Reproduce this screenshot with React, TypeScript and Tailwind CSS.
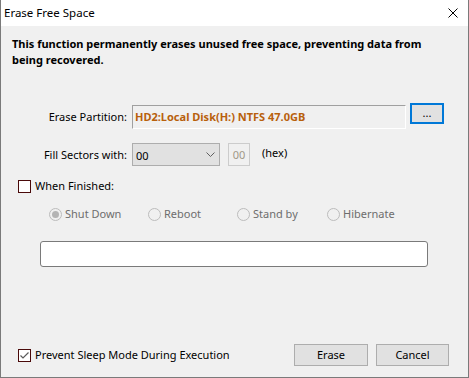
const font = { fontFamily: '"Noto Sans", "Open Sans", sans-serif' }

function Radio({ label, checked, className }: { label: string; checked?: boolean; className?: string }) {
  return (
    <div className={`flex items-center ${className ?? ''}`}>
      <span className="w-[13px] h-[13px] rounded-full border border-[#bcbcbc] bg-[#f0f0f0] flex items-center justify-center">
        {checked && <span className="w-[7px] h-[7px] rounded-full bg-[#b4b4b4]" />}
      </span>
      <span className="ml-[3px] text-[#6d6d6d]">{label}</span>
    </div>
  )
}

function Checkbox({ checked }: { checked?: boolean }) {
  return (
    <span className="w-[13px] h-[13px] border border-[#4a0a0a] bg-white flex items-center justify-center">
      {checked && (
        <svg width="11" height="11" viewBox="0 0 11 11">
          <path d="M1.5 5.5 L4 8 L9.5 2.5" fill="none" stroke="#5a5a5a" strokeWidth="1.2" />
        </svg>
      )}
    </span>
  )
}

export default function App() {
  return (
    <div
      className="w-[469px] h-[378px] flex flex-col bg-[#f0f0f0] border-x border-b border-[#7a7a7a] text-[11px] leading-[16px] text-black whitespace-nowrap"
      style={font}
    >
      {/* Title bar */}
      <div className="h-[26px] bg-white flex items-center justify-between pl-[3px] pr-[10px] shrink-0 text-[11.5px]">
        <span>Erase Free Space</span>
        <svg width="10" height="10" viewBox="0 0 10 10">
          <path d="M0.5 0.5 L9.5 9.5 M9.5 0.5 L0.5 9.5" stroke="#000" strokeWidth="1" />
        </svg>
      </div>

      <div className="flex-1 flex flex-col pl-[11px] pr-[19px] pt-[10px] pb-[11px]">
        <p className="font-bold">
          This function permanently erases unused free space, preventing data from
          <br />
          being recovered.
        </p>

        {/* Erase partition */}
        <div className="flex items-start mt-[37px]">
          <div className="w-[115px] h-[24px] flex items-center justify-end">Erase Partition:</div>
          <div className="ml-[5px] w-[274px] h-[24px] flex items-center pl-[2px] border-t border-l border-[#a0a0a0] border-b-white border-r-white border-b border-r font-bold text-[#b8600c]">
            HD2:Local Disk(H:) NTFS 47.0GB
          </div>
          <button className="ml-[4px] -mt-[2px] w-[34px] h-[21px] border-2 border-[#0078d7] bg-[#e1e1e1] flex items-center justify-center leading-none pb-[3px]">
            ...
          </button>
        </div>

        {/* Fill sectors */}
        <div className="flex items-center mt-[14px]">
          <div className="w-[115px] text-right">Fill Sectors with:</div>
          <div className="ml-[5px] w-[88px] h-[23px] border border-[#adadad] bg-[#e1e1e1] flex items-center justify-between pl-[3px] pr-[4px]">
            <span className="pt-[2px]">00</span>
            <svg width="9" height="6" viewBox="0 0 9 6">
              <path d="M0.5 0.5 L4.5 4.5 L8.5 0.5" fill="none" stroke="#606060" strokeWidth="1" />
            </svg>
          </div>
          <div className="ml-[8px] w-[22px] h-[23px] border border-[#cccccc] bg-[#f0f0f0] flex items-center justify-center text-[#a09888]">
            00
          </div>
          <span className="ml-[12px] -mt-[3px]">(hex)</span>
        </div>

        {/* When finished */}
        <div className="flex items-center mt-[12px] ml-[6px] h-[16px]">
          <Checkbox />
          <span className="ml-[4px]">When Finished:</span>
        </div>

        <div className="flex items-center mt-[12px] ml-[37px] h-[16px]">
          <Radio label="Shut Down" checked className="w-[99px]" />
          <Radio label="Reboot" className="w-[89px]" />
          <Radio label="Stand by" className="w-[90px]" />
          <Radio label="Hibernate" />
        </div>

        <div className="mt-[19px] ml-[28px] w-[388px] h-[26px] rounded-[3px] border border-[#7a7a7a] bg-white" />

        {/* Bottom row */}
        <div className="mt-auto flex items-center">
          <div className="ml-[6px] flex items-center">
            <Checkbox checked />
            <span className="ml-[4px]">Prevent Sleep Mode During Execution</span>
          </div>
          <div className="ml-auto flex gap-[8px]">
            <button className="w-[74px] h-[22px] border border-[#adadad] bg-[#e1e1e1]">Erase</button>
            <button className="w-[73px] h-[22px] border border-[#adadad] bg-[#e1e1e1]">Cancel</button>
          </div>
        </div>
      </div>
    </div>
  )
}
